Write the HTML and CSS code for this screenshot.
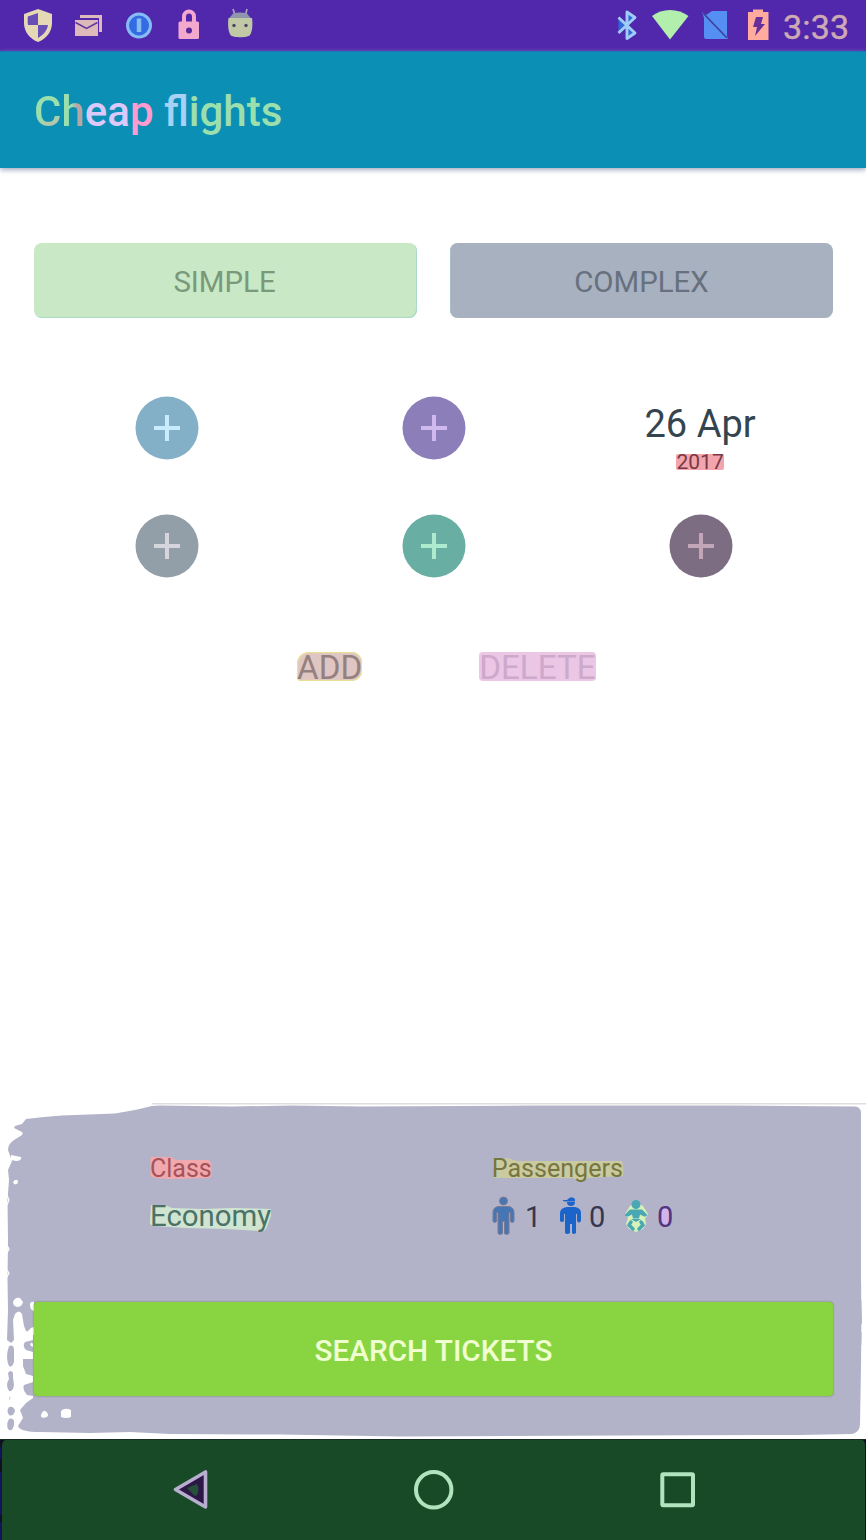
FILE: index.html
```html
<!DOCTYPE html>
<html lang="en">
<head>
<meta charset="utf-8">
<title>Cheap flights</title>
<link rel="stylesheet" href="styles.css">
</head>
<body>
<div class="screen">
  <div class="status-bar">
    <svg class="status-icons" width="260" height="51" viewBox="0 0 260 51">
      <path d="M38 9l14 5v9c0 9-6 16-14 19c-8-3-14-10-14-19v-9z" fill="#e5d8b5"/>
      <path d="M38 13v12H28c-.3-2-.4-5-.2-8.500zM38 25h10c-1 6-5 10-10 13z" fill="#6a4eb8"/>
      <path d="M80 15h22v17h-3V18H80z" fill="#deb9bc"/>
      <path d="M75 20h23v16H75z" fill="#deb9bc"/>
      <path d="M75.500 22.500l11 6 11-6" fill="none" stroke="#61369f" stroke-width="1.500"/>
      <circle cx="139" cy="25.500" r="11.500" fill="#356be2" stroke="#86bcf5" stroke-width="3"/>
      <path d="M139 18.500v13.500" stroke="#86bcf5" stroke-width="4.500"/>
      <path d="M184 23v-6.500a5 5 0 0 1 10 0V23" fill="none" stroke="#f3a9cd" stroke-width="4"/>
      <rect x="178.500" y="21.500" width="20.500" height="17.500" rx="1.500" fill="#f3a9cd"/>
      <circle cx="189" cy="30.500" r="3" fill="#59279c"/>
      <path d="M233 9l2 6M247 9l-1.500 6" stroke="#a6a4b5" stroke-width="1.700"/>
      <path d="M233 13.500q7-2 14 0l4 5H229z" fill="#8f95ad"/>
      <path d="M228.500 18h23.500c.8 6 .5 13-2 17-2 3-17.500 3-19.500 0-2.500-4-2.800-11-2-17z" fill="#c1c8a6"/>
      <circle cx="234" cy="25.500" r="1.700" fill="#4b4468"/><circle cx="246" cy="25.500" r="1.700" fill="#4b4468"/>
    </svg>
    <div class="status-right">
      <svg width="170" height="51" viewBox="610 0 170 51">
        <path d="M618.500 17.500l16.500 15.500-8 5.500V12l8 5.500-16.500 15.500" fill="#3465d9" stroke="#9fcdf8" stroke-width="2.900" stroke-linejoin="round"/>
        <path d="M652 16c10-8 26-8 36.500 0L670 39.500z" fill="#b2efac"/>
        <path d="M702 12l4 3 6-4h15v25l1 3h-22q-2 0-2-3V18z" fill="#568ff3"/>
        <path d="M703 13l24 25" stroke="#38429c" stroke-width="1.700"/>
        <path d="M749 12h4v-2.500h10V12h5.500v28h-20.500V12z" fill="#ffac9f"/>
        <path d="M756 17h7l-2 7h4L755 36l2-9h-4z" fill="#672f99"/>
      </svg>
      <span class="clock">3:33</span>
    </div>
  </div>

  <header class="app-bar">
    <h1 class="title"><span class="title-c">C</span><span class="title-h">h</span><span class="title-ea">ea</span><span class="title-p">p</span> <span class="title-fl">fl</span>ights</h1>
  </header>

  <main class="content">
    <div class="tabs">
      <div class="tab tab-simple">SIMPLE</div>
      <div class="tab tab-complex">COMPLEX</div>
    </div>
    <div class="route-grid">
      <div class="cell"><svg class="plus plus-blue" viewBox="0 0 64 64"><circle cx="32" cy="32" r="31.500"/><path d="M32 19v26M19 32h26"/></svg></div>
      <div class="cell"><svg class="plus plus-violet" viewBox="0 0 64 64"><circle cx="32" cy="32" r="31.500"/><path d="M32 19v26M19 32h26"/></svg></div>
      <div class="cell date"><span class="day">26 Apr</span><span class="year">2017</span></div>
      <div class="cell"><svg class="plus plus-grey" viewBox="0 0 64 64"><circle cx="32" cy="32" r="31.500"/><path d="M32 19v26M19 32h26"/></svg></div>
      <div class="cell"><svg class="plus plus-green" viewBox="0 0 64 64"><circle cx="32" cy="32" r="31.500"/><path d="M32 19v26M19 32h26"/></svg></div>
      <div class="cell"><svg class="plus plus-mauve" viewBox="0 0 64 64"><circle cx="32" cy="32" r="31.500"/><path d="M32 19v26M19 32h26"/></svg></div>
    </div>
    <div class="actions">
      <span class="action add">ADD</span>
      <span class="action delete">DELETE</span>
    </div>
  </main>

  <footer class="summary">
    <svg class="backdrop" viewBox="0 1103 866 336">
      <path d="M152 1103.500H866" stroke="#dddde2" stroke-width="2"/>
      <path fill="#b2b3c8" d="M26 1119L44 1117 62 1115.500 115 1113.500 135 1110 152 1106 160 1105.500 232 1106.500 292 1105.500 362 1106.500 532 1105.500 732 1105.500 855 1106.500Q861 1107 861 1113V1280L862 1320 861 1365 860 1424Q860 1432 852 1434L800 1435 620 1435.500 400 1436.500 280 1434.500 170 1434 130 1432 90 1433 40 1432Q20 1432 18 1426L23 1418 20 1410 26 1403 33 1398V1396L27 1395Q22 1390 24 1385L33 1382V1376L26 1374 23 1366V1359H33V1352L26 1350Q22 1346 25 1342L33 1340V1333L26 1331 24 1326 22 1314Q19 1309 15 1314L13 1320 14 1340 11 1343 7 1340 8 1310 7.500 1280 8 1240 7.500 1200 9 1180 8 1170 12 1161 8 1150Q8 1144 14 1140L22 1135Q24 1132 20 1131L14 1128 15 1126 22 1124z"/>
      <path fill="#b2b3c8" d="M9 1346q5-2 5 4v12q-2 6-5 4-4-8 0-20zM8 1373q3-4 5 0v4l1 8q-1 7-5 6-4-6 0-12zM10 1396q1 3-1 4zM9 1407q5-1 6 4-2 6-6 4-3-4 0-8zM9 1419q6-2 5 6-2 8-6 4-2-5 1-10z"/>
      <path fill="#fff" d="M11 1155l10 2q1 4-5 4l-5-1zM13 1182q3-4 5-1 0 4-4 3zM13 1302q2-5 7-4l3 4q-1 5-6 5-4-1-4-5zM30 1305q0-4 4-3v9q-4-1-4-6zM20 1332l6 1 5-5 3-1v8zM30 1344q2-2 3 0v3q-2 0-3-3zM41 1415q2-5 4-4 3 1 3 5-3 3-7 1zM61 1411q4-4 10-1v7q-5 2-10 0z"/>
      <path d="M7 1195l2 5-2 5M7 1245l2 4-2 4M7 1270l2 3-2 4M862 1290v10M862 1324v8M862 1345v14" stroke="#fff" stroke-width="1.200" fill="none"/>
      <path d="M150.500 1157h21l4 3h32q4 1 4 5v10q-1 4-5 3l-32 1q-22 0-24-3z" fill="#f1a9ad"/>
      <path d="M151 1205h14l7 3 32 1 28-1 39 1v7l-4 11q-2 5-6 4l-35-2-40-1-32-2q-5-1-4-5z" fill="#cfe5d1"/>
      <path d="M493 1159l15-1 9 3h105q2 8 1 15l-35 2-7 3-9-3h-78z" fill="#cacaa0"/>
      <ellipse cx="665" cy="1216.500" rx="5" ry="9" fill="#d0b4ed"/>
    </svg>
    <div class="details">
      <section class="travel-class">
        <div class="label class-label">Class</div>
        <div class="value economy">Economy</div>
      </section>
      <section class="passengers">
        <div class="label passenger-label">Passengers</div>
        <div class="people">
          <svg class="person" width="24" height="40" viewBox="491 1196 24 40">
            <g fill="#4776b5" stroke="#797b94" stroke-width="1"><circle cx="503.500" cy="1201" r="4"/><path d="M498 1206.500h11q5 1 5 6v9q-2 2-3.500 0v-9h-1.500v21q-3 2-4.500 0v-12h-2v12q-3 2-4.500 0v-21h-1.500v9q-2 2-3.500 0v-9q0-5 5-6z"/></g>
          </svg>
          <span class="count adult">1</span>
          <svg class="person" width="24" height="40" viewBox="559 1196 24 40">
            <g fill="#1b65ca"><path d="M563 1200h4q4-5 8-1v2.500h-9q-4 0-3-1.500z"/><path d="M567 1202h8q0 4-4 4t-4-4z"/><path d="M567 1207h8q6 1 6 6v8q-2 3-4 0v-7h-1v19q-2 2-4 0v-9h-2v9q-3 2-5 0v-19h-1v7q-2 2-4 0v-8q0-5 7-6z"/></g>
          </svg>
          <span class="count child">0</span>
          <svg class="person" width="26" height="40" viewBox="623 1196 26 40">
            <path d="M630 1206l6-4 7 4 5 8-3 5 1 5-3 5-7 3-7-3-3-5 2-6-3-4z" fill="#d7f2b8"/>
            <g fill="#4aa7b4"><circle cx="636" cy="1204.500" r="4.500"/><path d="M630 1209.500h12l5 5q0 2-3 2l-4-2-1 4h-6l-1-4-4 2q-3 0-3-2z"/><path d="M631 1219h10l-5 3z"/></g>
            <path d="M631 1222l-2 3 4 4M641 1222l2 3-4 4" fill="none" stroke="#4aa7b4" stroke-width="3.500" stroke-linecap="round" stroke-linejoin="round"/>
          </svg>
          <span class="count infant">0</span>
        </div>
      </section>
    </div>
    <div class="search">SEARCH TICKETS</div>
  </footer>

  <nav class="nav-bar">
    <svg width="866" height="101" viewBox="0 1439 866 101">
      <path d="M0 1439h8q-6 1-6 7v94H0zM866 1439h-5q3 1 4 5v96h1z" fill="#101020"/>
      <path d="M0 1447h1.500v12H0zM0 1472h2v43H0zM0 1522h2v18H0z" fill="#14145a"/>
      <path d="M0 1439.500h866" stroke="#172d20"/>
      <path d="M205.500 1472v35l-30-17.500z" fill="#2c1747" stroke="#b8aed0" stroke-width="3.600" stroke-linejoin="round"/>
      <path d="M187 1488l10-4q3 5 0 11-3 2-5-2z" fill="#275039"/>
      <circle cx="433.700" cy="1489.800" r="17.700" fill="none" stroke="#b2e3bf" stroke-width="4"/>
      <rect x="662.300" y="1474.300" width="30.700" height="31" rx="1" fill="none" stroke="#b2e3bf" stroke-width="4"/>
    </svg>
  </nav>
</div>
</body>
</html>
```
FILE: styles.css
```css
* { box-sizing: border-box; }
body { margin: 0; background: #fff; font-family: Roboto, "Liberation Sans", sans-serif; }
svg { display: block; flex: none; }
.screen { width: 866px; height: 1540px; display: flex; flex-direction: column; overflow: hidden; }
.status-bar { height: 51px; flex: none; background: #5128ac; display: flex; justify-content: space-between; }
.status-right { display: flex; width: 256px; }
.clock { color: #ceaab5; font-size: 34px; line-height: 54px; margin-left: 3px; letter-spacing: .2px; -webkit-text-stroke: .4px #ceaab5; }
.app-bar { height: 117px; flex: none; background: #0c8fb5; border-top: 1px solid #1a76b7; box-shadow: 0 2px 5px #a4aac2; padding: 33px 34px 0; }
.title { margin: 0; font-size: 42px; line-height: 54px; font-weight: 500; color: #9be0ac; white-space: nowrap; }
.title-c { background: linear-gradient(160deg, #9be0ac 55%, #cbb0a7 90%); -webkit-background-clip: text; background-clip: text; color: transparent; }
.title-h { background: linear-gradient(90deg, #9be0ac 45%, #b6a7a5 65%); -webkit-background-clip: text; background-clip: text; color: transparent; }
.title-ea { color: #ddc8fa; }
.title-p { color: #ff9bce; }
.title-fl { color: #a8d1f6; }
.content { flex: 1; padding: 75px 33px 0 34px; }
.tabs { display: grid; grid-template-columns: 1fr 1fr; gap: 33px; height: 75px; }
.tab { height: 75px; border-radius: 8px; font-size: 29.4px; line-height: 78px; text-align: center; }
.tab-simple { background: #c8e8c6; color: #79997a; box-shadow: inset -1px -1px #acd9c6; padding-right: 2px; }
.tab-complex { background: #a8b1bf; color: #66707e; box-shadow: inset 1px 0 #a5bdc4; }
.route-grid { margin: 51px -1px 0 -.5px; display: grid; grid-template-columns: repeat(3, 1fr); grid-auto-rows: 118px; }
.cell { display: flex; align-items: center; justify-content: center; }
.plus { width: 64px; height: 64px; stroke-width: 4; }
.plus circle { stroke: none; }
.plus-blue { fill: #84b0c7; stroke: #c8ebfe; }
.plus-violet { fill: #8b7eb9; stroke: #d0b9ee; }
.plus-grey { fill: #929fa9; stroke: #d6d4dc; }
.plus-green { fill: #69aea2; stroke: #aeebce; }
.plus-mauve { fill: #7c6d82; stroke: #c2a6b7; }
.date { flex-direction: column; padding: 14px 1px 0 0; }
.day { color: #344550; font-size: 38px; line-height: 46px; }
.year { background: #f3a5ae; color: #793944; font-size: 21px; line-height: 17px; height: 16px; margin-top: 7px; border-radius: 2px; }
.actions { display: flex; padding: 47px 0 0 263px; gap: 117px; }
.action { font-size: 33.2px; line-height: 31px; height: 29px; }
.add { background: #dfc6c2; color: #958081; border-radius: 12px 10px 10px 4px; box-shadow: inset 0 0 1px 1px #e8e48c; }
.delete { background: #ebc6e5; color: #cda9cc; border-radius: 4px; }
.summary { height: 336px; flex: none; position: relative; }
.backdrop { position: absolute; inset: 0; width: 866px; height: 336px; }
.details { position: relative; display: flex; height: 199px; padding: 49px 0 0 150px; }
.travel-class { width: 341px; }
.label { font-size: 25px; line-height: 34px; }
.class-label { color: #a6525b; }
.passenger-label { color: #77763f; padding-left: .7px; font-size: 25.1px; }
.value { font-size: 29.4px; line-height: 38px; margin-top: 11px; color: #4c7268; }
.people { display: flex; margin-top: 10px; height: 40px; }
.count { font-size: 29px; line-height: 42px; color: #36364f; }
.adult { width: 34px; margin-left: 10px; }
.child { width: 34px; margin-left: 6px; }
.infant { margin-left: 8px; color: #52357e; }
.search { position: relative; margin: 0 33px 0 34px; height: 94px; background: #89d541; color: #efffd1; border-radius: 4px; text-align: center; font-size: 29.7px; line-height: 97px; font-weight: 500; box-shadow: 0 0 2px #62784c; }
.nav-bar { height: 101px; flex: none; background: #194a28; }
```
